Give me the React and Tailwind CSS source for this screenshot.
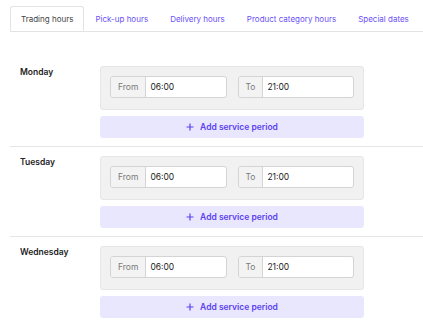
import React from 'react';

const tabs = ['Trading hours', 'Pick-up hours', 'Delivery hours', 'Product category hours', 'Special dates'];
const days = ['Monday', 'Tuesday', 'Wednesday'];

const TimeField = ({ label, value }) => (
  <div className="flex h-[22px] rounded-[3px] border border-[#d4d4d4] bg-white overflow-hidden">
    <div className="flex items-center px-[7px] bg-[#f3f3f3] border-r border-[#d4d4d4] text-[#7a7a7a]">
      {label}
    </div>
    <div className="flex items-center px-[4px] text-[#222]">{value}</div>
  </div>
);

const DayRow = ({ day, first }) => (
  <section className={`flex pl-[10px] pt-[9px] pb-[8px] ${first ? '' : 'border-t border-[#e6e6e6]'}`}>
    <div className="w-[80px] text-[8.5px] leading-[12px] font-semibold text-[#222]">{day}</div>
    <div className="w-[264px]">
      <div className="grid grid-cols-2 gap-[11px] px-[9px] pt-[9px] pb-[11px] bg-[#f1f1f1] border border-[#e6e6e6] rounded-[3px]">
        <TimeField label="From" value="06:00" />
        <TimeField label="To" value="21:00" />
      </div>
      <button className="mt-[6px] w-full h-[22px] flex items-center justify-center gap-[6px] rounded-[3px] bg-[#e9e7fd] text-[#5b41f0] font-semibold">
        <svg width="8" height="8" viewBox="0 0 8 8" fill="none" stroke="currentColor" strokeWidth="1.2">
          <path d="M4 0.5v7M0.5 4h7" />
        </svg>
        Add service period
      </button>
    </div>
  </section>
);

export default function App() {
  return (
    <div className="min-h-screen bg-white text-[8.5px] font-['Inter',sans-serif] overflow-hidden">
      {/* TABS */}
      <nav className="flex ml-[10px] mt-[6px] border-b border-[#e3e3e3] whitespace-nowrap text-[8px]">
        {tabs.map((t, i) =>
          i === 0 ? (
            <div key={t} className="shrink-0 -mb-px h-[25px] flex items-center px-[10px] border border-[#e3e3e3] border-b-white rounded-t-[3px] bg-white text-[#444]">
              {t}
            </div>
          ) : (
            <div key={t} className="shrink-0 h-[25px] flex items-center px-[11px] text-[#6a4ff5]">
              {t}
            </div>
          )
        )}
      </nav>

      {/* DAYS */}
      <div className="ml-[10px] pt-[25px]">
        {days.map((d, i) => (
          <DayRow key={d} day={d} first={i === 0} />
        ))}
      </div>
    </div>
  );
}
